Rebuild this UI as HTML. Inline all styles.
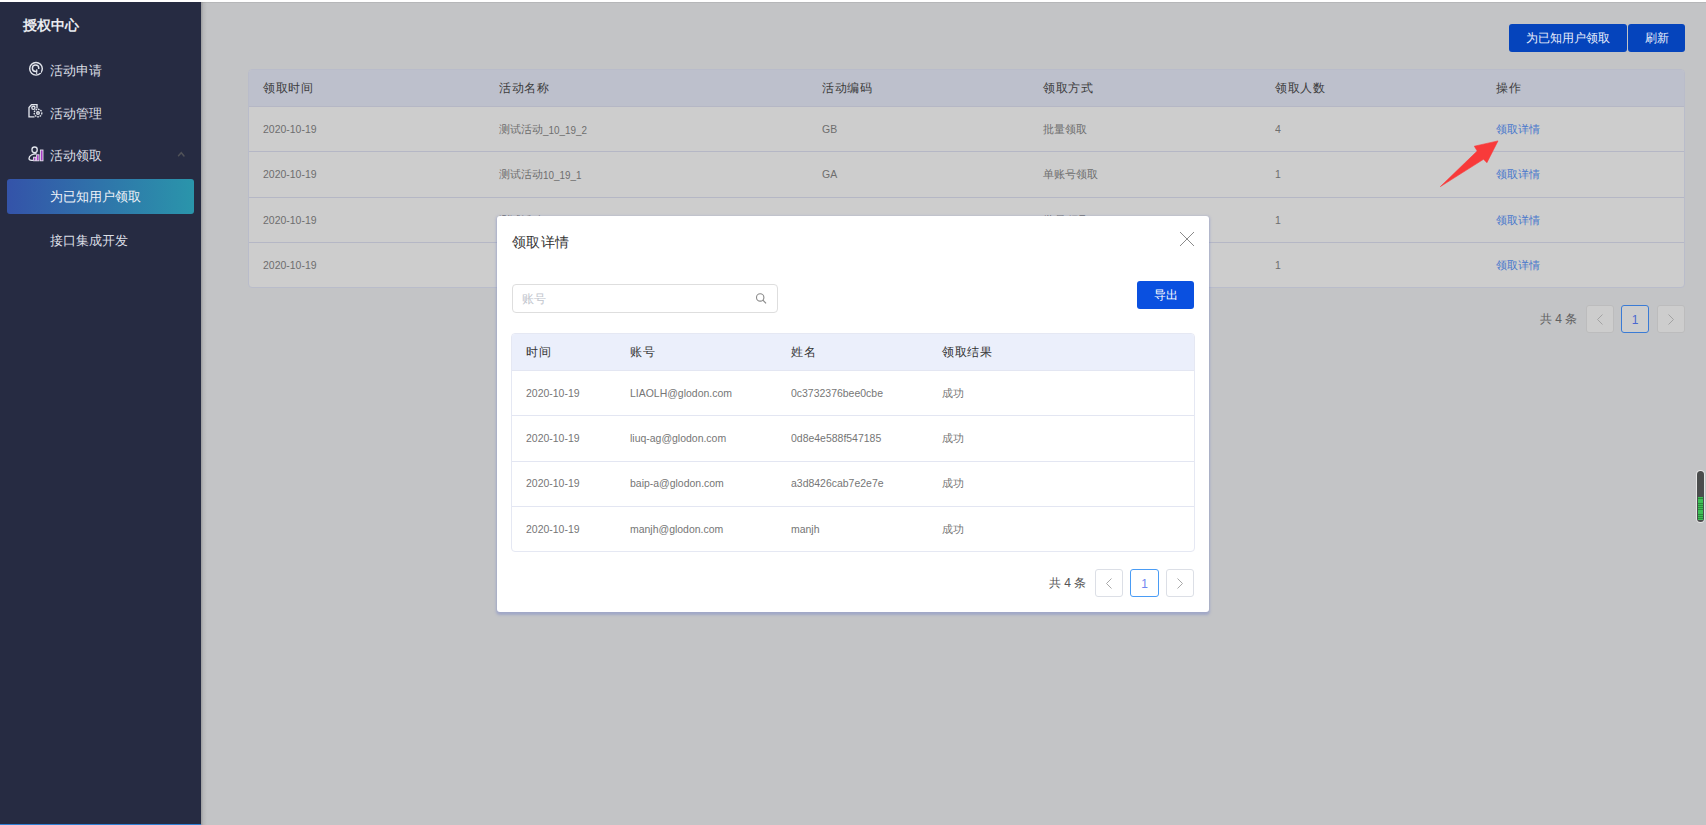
<!DOCTYPE html>
<html><head><meta charset="utf-8">
<style>
*{box-sizing:border-box;margin:0;padding:0}
html,body{width:1706px;height:825px;overflow:hidden}
body{position:relative;background:#c3c4c6;font-family:"Liberation Sans",sans-serif;}
.a{position:absolute;white-space:nowrap}
#topline{left:0;top:0;width:1706px;height:2px;background:#fff}
#side{left:0;top:2px;width:201px;height:823px;background:#262b42}
#sideshadow{left:201px;top:2px;width:6px;height:823px;background:linear-gradient(to right,rgba(0,0,0,.2),rgba(0,0,0,.06) 40%,rgba(0,0,0,0))}
#sidebot{left:0;top:824px;width:201px;height:1px;background:#2f80d4}
.st{color:#e9ebf0;font-size:14px;font-weight:bold}
.mi{color:#dcdfe6;font-size:12.7px}
#active{left:7px;top:179px;width:187px;height:35px;border-radius:3px;background:linear-gradient(to right,#3453a9,#2a95ab)}
/* main table */
#tbl{left:248px;top:69px;width:1437px;height:219px;border:1px solid #b9bcca;border-radius:4px;background:#cdcdcd;overflow:hidden}
#thead{left:0;top:0;width:100%;height:37px;background:#bdc0cc}
.rl{left:0;width:100%;height:1px;background:#b5b7c5}
.th{font-size:12px;color:#3c3c3c;letter-spacing:0.5px}
.td{font-size:11px;color:#6e6e6e}
.l2{position:relative;top:1px;transform:scaleX(.86)!important}
.l{display:inline-block;font-size:11.5px;transform:scaleX(.91);transform-origin:0 0}
.lk{font-size:11px;color:#4a78cc}
.btn{background:#0544bc;color:#e8eefb;font-size:12px;border-radius:3px;text-align:center}
.pg{border:1px solid #bcbcbd;background:#cdcdcd;border-radius:3px;width:28px;height:28px;text-align:center;line-height:26px;color:#a0a0a0;font-size:12px}
/* modal */
#modal{left:497px;top:216px;width:712px;height:396px;background:#fff;border-radius:3px;box-shadow:0 1.5px 2.5px 1px rgba(120,132,200,.45)}
#mt{left:14px;top:17px;width:684px;height:219px;border:1px solid #e5e8f3;border-radius:4px;overflow:hidden}
#mthead{left:0;top:0;width:100%;height:37px;background:#ebeffb}
.mrl{left:0;width:100%;height:1px;background:#e3e6f2}
.mth{font-size:12px;color:#333;letter-spacing:0.5px}
.mtd{font-size:11px;color:#767676}
.mpg{border:1px solid #dcdfe6;border-radius:3px;width:28px;height:28px;text-align:center;line-height:26px;color:#b0b0b0;font-size:12px}
</style></head><body>
<div class="a" id="topline"></div><div class="a" style="left:201px;top:2px;width:1505px;height:1px;background:#b6b7b9"></div>
<div class="a" id="side"></div>
<div class="a" id="sideshadow"></div>
<div class="a" id="sidebot"></div>

<svg class="a" style="left:0;top:0" width="201" height="260" viewBox="0 0 201 260">
  <g fill="none" stroke="#e2e5ec" stroke-width="1.45">
    <circle cx="36" cy="68.8" r="6.3"/>
    <circle cx="35.6" cy="68.2" r="3.2"/>
  </g>
  <rect x="37.2" y="69" width="3.6" height="4" fill="#262b42"/>
  <path d="M36.7 69.2V74" stroke="#dfe2ea" stroke-width="1.1"/>
  <g fill="none" stroke="#e2e5ec" stroke-width="1.35">
    <path d="M34.5 116.9H29V107.5L31.5 104.6H37V108.5"/>
    <circle cx="33.4" cy="107.8" r="1.6"/>
    <circle cx="38" cy="113" r="3.8" stroke-dasharray="1.6 0.9"/>
    <circle cx="38" cy="113" r="1.3"/>
  </g>
  <g fill="none" stroke="#e2e5ec" stroke-width="1.35">
    <rect x="32" y="147" width="5.2" height="5.6" rx="2.6"/>
    <path d="M36.5 153.7C33 153.7 29 155.5 29 158.6 29 159.8 30 160.3 31.5 160.3H33"/>
  </g>
  <g fill="#a83cc4" stroke="#e6e2ee" stroke-width="0.9">
    <rect x="33.6" y="157.2" width="2.2" height="3.6"/>
    <rect x="36.6" y="154.8" width="2.4" height="6"/>
    <rect x="40.4" y="150" width="2.6" height="10.8"/>
  </g>
  <path d="M178.5 155.7L181.3 152.7L184 155.9" fill="none" stroke="#505258" stroke-width="1.5" stroke-linecap="round"/>
</svg>
<div class="a st" style="left:23px;top:17px">授权中心</div>
<div class="a mi" style="left:50px;top:63px">活动申请</div>
<div class="a mi" style="left:50px;top:106px">活动管理</div>
<div class="a mi" style="left:50px;top:148px">活动领取</div>
<div class="a" id="active"></div>
<div class="a mi" style="left:50px;top:189px;color:#eef2f8">为已知用户领取</div>
<div class="a mi" style="left:50px;top:232.5px">接口集成开发</div>

<!-- top buttons -->
<div class="a btn" style="left:1509px;top:24px;width:118px;height:28px;line-height:28px">为已知用户领取</div>
<div class="a btn" style="left:1628px;top:24px;width:57px;height:28px;line-height:28px">刷新</div>

<div class="a" id="tbl">
  <div class="a" id="thead"></div>
  <div class="a rl" style="top:36px"></div>
  <div class="a rl" style="top:81px"></div>
  <div class="a rl" style="top:127px"></div>
  <div class="a rl" style="top:172px"></div>
  <div class="a th" style="left:14px;top:10px">领取时间</div>
  <div class="a th" style="left:250px;top:10px">活动名称</div>
  <div class="a th" style="left:573px;top:10px">活动编码</div>
  <div class="a th" style="left:794px;top:10px">领取方式</div>
  <div class="a th" style="left:1026px;top:10px">领取人数</div>
  <div class="a th" style="left:1247px;top:10px">操作</div>

  <div class="a td" style="left:14px;top:53px"><span class="l">2020-10-19</span></div>
  <div class="a td" style="left:250px;top:52px">测试活动<span class="l l2">_10_19_2</span></div>
  <div class="a td" style="left:573px;top:53px"><span class="l">GB</span></div>
  <div class="a td" style="left:794px;top:52px">批量领取</div>
  <div class="a td" style="left:1026px;top:53px"><span class="l">4</span></div>
  <div class="a lk" style="left:1247px;top:52px">领取详情</div>

  <div class="a td" style="left:14px;top:98px"><span class="l">2020-10-19</span></div>
  <div class="a td" style="left:250px;top:97px">测试活动<span class="l l2">10_19_1</span></div>
  <div class="a td" style="left:573px;top:98px"><span class="l">GA</span></div>
  <div class="a td" style="left:794px;top:97px">单账号领取</div>
  <div class="a td" style="left:1026px;top:98px"><span class="l">1</span></div>
  <div class="a lk" style="left:1247px;top:97px">领取详情</div>

  <div class="a td" style="left:14px;top:144px"><span class="l">2020-10-19</span></div>
  <div class="a td" style="left:250px;top:143px">测试活动<span class="l l2">1</span></div>
  <div class="a td" style="left:794px;top:143px;letter-spacing:1px">批量领取</div>
  <div class="a td" style="left:1026px;top:144px"><span class="l">1</span></div>
  <div class="a lk" style="left:1247px;top:143px">领取详情</div>

  <div class="a td" style="left:14px;top:189px"><span class="l">2020-10-19</span></div>
  <div class="a td" style="left:1026px;top:189px"><span class="l">1</span></div>
  <div class="a lk" style="left:1247px;top:188px">领取详情</div>
</div>

<!-- main pagination -->
<div class="a" style="left:1540px;top:311px;font-size:12px;color:#606060">共 4 条</div>
<div class="a pg" style="left:1586px;top:305px"><svg width="26" height="26" viewBox="0 0 26 26" style="display:block"><path d="M15.5 8.5L10.5 13.5L15.5 18.5" fill="none" stroke="#a3a3a3" stroke-width="1"/></svg></div>
<div class="a pg" style="left:1621px;top:305px;border:1.5px solid #3a7bd5;color:#4a68d0;line-height:29px">1</div>
<div class="a pg" style="left:1657px;top:305px"><svg width="26" height="26" viewBox="0 0 26 26" style="display:block"><path d="M10.5 8.5L15.5 13.5L10.5 18.5" fill="none" stroke="#a3a3a3" stroke-width="1"/></svg></div>

<!-- arrow -->
<svg class="a" style="left:1430px;top:130px" width="80" height="70" viewBox="0 0 80 70"><path d="M10.4 56.6L47.2 21L44.3 16.2L68 10.9L56.9 32.7L53.5 29.3Z" fill="#f83a3a" stroke="#f83a3a" stroke-width="0.6" stroke-linejoin="round"/></svg>

<!-- modal -->
<div class="a" id="modal">
  <div class="a" style="left:15px;top:18px;font-size:14px;color:#333;letter-spacing:0.4px">领取详情</div>
  <svg class="a" style="left:682px;top:15px" width="16" height="16" viewBox="0 0 16 16"><path d="M1 1L15 15M15 1L1 15" stroke="#8a8a8a" stroke-width="1"/></svg>
  <div class="a" style="left:15px;top:68px;width:266px;height:29px;border:1px solid #dedede;border-radius:4px"></div>
  <div class="a" style="left:25px;top:75px;font-size:12px;color:#c0c4cc">账号</div>
  <svg class="a" style="left:258px;top:76px" width="12" height="13" viewBox="0 0 12 13"><circle cx="5.2" cy="5.4" r="3.7" fill="none" stroke="#8a8a8a" stroke-width="1.1"/><path d="M7.9 8.1L11 11.3" stroke="#8a8a8a" stroke-width="1.2"/></svg>
  <div class="a" style="left:640px;top:65px;width:57px;height:28px;background:#0a50e0;border-radius:3px;color:#fff;font-size:12px;text-align:center;line-height:28px">导出</div>
  <div class="a" id="mt" style="top:117px">
    <div class="a" id="mthead"></div>
    <div class="a mrl" style="top:36px"></div>
    <div class="a mrl" style="top:81px"></div>
    <div class="a mrl" style="top:127px"></div>
    <div class="a mrl" style="top:172px"></div>
    <div class="a mth" style="left:14px;top:10px">时间</div>
    <div class="a mth" style="left:118px;top:10px">账号</div>
    <div class="a mth" style="left:279px;top:10px">姓名</div>
    <div class="a mth" style="left:430px;top:10px">领取结果</div>

    <div class="a mtd" style="left:14px;top:53px"><span class="l">2020-10-19</span></div>
    <div class="a mtd" style="left:118px;top:53px"><span class="l">LIAOLH@glodon.com</span></div>
    <div class="a mtd" style="left:279px;top:53px"><span class="l">0c3732376bee0cbe</span></div>
    <div class="a mtd" style="left:430px;top:52px">成功</div>

    <div class="a mtd" style="left:14px;top:98px"><span class="l">2020-10-19</span></div>
    <div class="a mtd" style="left:118px;top:98px"><span class="l">liuq-ag@glodon.com</span></div>
    <div class="a mtd" style="left:279px;top:98px"><span class="l">0d8e4e588f547185</span></div>
    <div class="a mtd" style="left:430px;top:97px">成功</div>

    <div class="a mtd" style="left:14px;top:143px"><span class="l">2020-10-19</span></div>
    <div class="a mtd" style="left:118px;top:143px"><span class="l">baip-a@glodon.com</span></div>
    <div class="a mtd" style="left:279px;top:143px"><span class="l">a3d8426cab7e2e7e</span></div>
    <div class="a mtd" style="left:430px;top:142px">成功</div>

    <div class="a mtd" style="left:14px;top:189px"><span class="l">2020-10-19</span></div>
    <div class="a mtd" style="left:118px;top:189px"><span class="l">manjh@glodon.com</span></div>
    <div class="a mtd" style="left:279px;top:189px"><span class="l">manjh</span></div>
    <div class="a mtd" style="left:430px;top:188px">成功</div>
  </div>
  <div class="a" style="left:552px;top:359px;font-size:12px;color:#555">共 4 条</div>
  <div class="a mpg" style="left:598px;top:353px"><svg width="26" height="26" viewBox="0 0 26 26" style="display:block"><path d="M15.5 8.5L10.5 13.5L15.5 18.5" fill="none" stroke="#a8a8a8" stroke-width="1"/></svg></div>
  <div class="a mpg" style="left:633px;top:353px;border:1.5px solid #4a9cf5;color:#6f86f0;width:29px;line-height:29px">1</div>
  <div class="a mpg" style="left:669px;top:353px"><svg width="26" height="26" viewBox="0 0 26 26" style="display:block"><path d="M10.5 8.5L15.5 13.5L10.5 18.5" fill="none" stroke="#a8a8a8" stroke-width="1"/></svg></div>
</div>

<!-- right widget -->
<div class="a" style="left:1696px;top:470px;width:9px;height:53px;border-radius:5px;background:#e6e6e6"></div>
<div class="a" style="left:1697px;top:471px;width:7px;height:51px;border-radius:4px;background:#4b4d4d;overflow:hidden">
<div class="a" style="left:1px;top:26px;width:5px;height:23px;background:repeating-linear-gradient(to bottom,#3fbf57 0,#3fbf57 1.3px,#2a8a3c 1.3px,#2a8a3c 2.2px)"></div>
</div>
</body></html>
